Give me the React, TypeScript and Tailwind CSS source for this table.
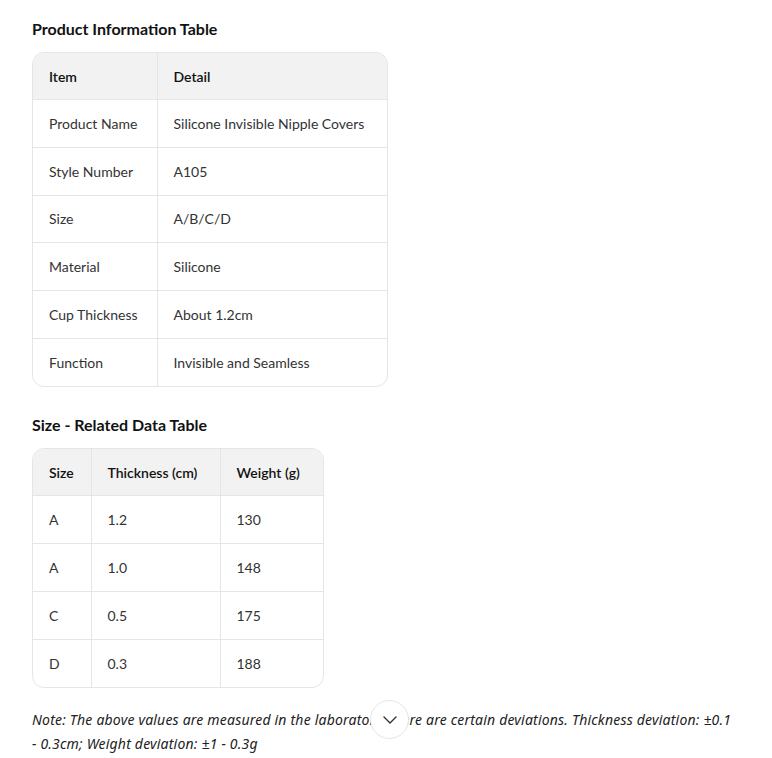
import { ChevronDown } from "lucide-react";

const productRows = [
    ["Product Name", "Silicone Invisible Nipple Covers"],
    ["Style Number", "A105"],
    ["Size", "A/B/C/D"],
    ["Material", "Silicone"],
    ["Cup Thickness", "About 1.2cm"],
    ["Function", "Invisible and Seamless"],
];

const sizeRows = [
    ["A", "1.2", "130"],
    ["A", "1.0", "148"],
    ["C", "0.5", "175"],
    ["D", "0.3", "188"],
];

function DataTable({ headers, rows, widths }: { headers: string[]; rows: string[][]; widths: string[] }) {
    return (
        <div className="inline-block rounded-xl border border-[#e5e5e5] overflow-hidden">
            <table className="border-collapse table-fixed text-[14px]">
                <colgroup>
                    {widths.map((w, i) => (
                        <col key={i} className={w} />
                    ))}
                </colgroup>
                <thead>
                    <tr className="bg-[#f2f2f2] h-[46.5px]">
                        {headers.map((h, i) => (
                            <th
                                key={h}
                                className={`px-4 text-left font-semibold whitespace-nowrap text-[#111] ${i > 0 ? "border-l border-[#e5e5e5]" : ""}`}
                            >
                                {h}
                            </th>
                        ))}
                    </tr>
                </thead>
                <tbody>
                    {rows.map((row, r) => (
                        <tr key={r} className="h-[47.8px] border-t border-[#e5e5e5]">
                            {row.map((c, i) => (
                                <td
                                    key={i}
                                    className={`px-4 text-[#333] whitespace-nowrap ${i > 0 ? "border-l border-[#e5e5e5]" : ""}`}
                                >
                                    {c}
                                </td>
                            ))}
                        </tr>
                    ))}
                </tbody>
            </table>
        </div>
    );
}

export default function App() {
    return (
        <div className="relative w-[772px] h-[758px] bg-white px-8 pt-[19px] font-['Lato','Open_Sans',sans-serif] text-[#111]">
            {/* Product Information */}
            <h2 className="text-[16px] font-bold leading-5 mb-[13px]">Product Information Table</h2>
            <DataTable
                headers={["Item", "Detail"]}
                rows={productRows}
                widths={["w-[124px]", "w-[230px]"]}
            />

            {/* Size data */}
            <h2 className="text-[16px] font-bold leading-5 mt-[22px] mb-[13px]">Size - Related Data Table</h2>
            <DataTable
                headers={["Size", "Thickness (cm)", "Weight (g)"]}
                rows={sizeRows}
                widths={["w-[58px]", "w-[129px]", "w-[103px]"]}
            />

            <p className="mt-[14px] w-[702px] font-['Noto_Sans',sans-serif] text-[14px] italic leading-6 tracking-[0.2px] text-[#222]">
                Note: The above values are measured in the laboratory, there are certain deviations. Thickness deviation: ±0.1 - 0.3cm; Weight deviation: ±1 - 0.3g
            </p>

            {/* scroll-down button */}
            <button className="absolute left-[370px] top-[700px] flex size-[39px] items-center justify-center rounded-full border border-[#e5e5e5] bg-white">
                <ChevronDown className="size-6 text-[#333]" strokeWidth={1.4} />
            </button>
        </div>
    );
}
